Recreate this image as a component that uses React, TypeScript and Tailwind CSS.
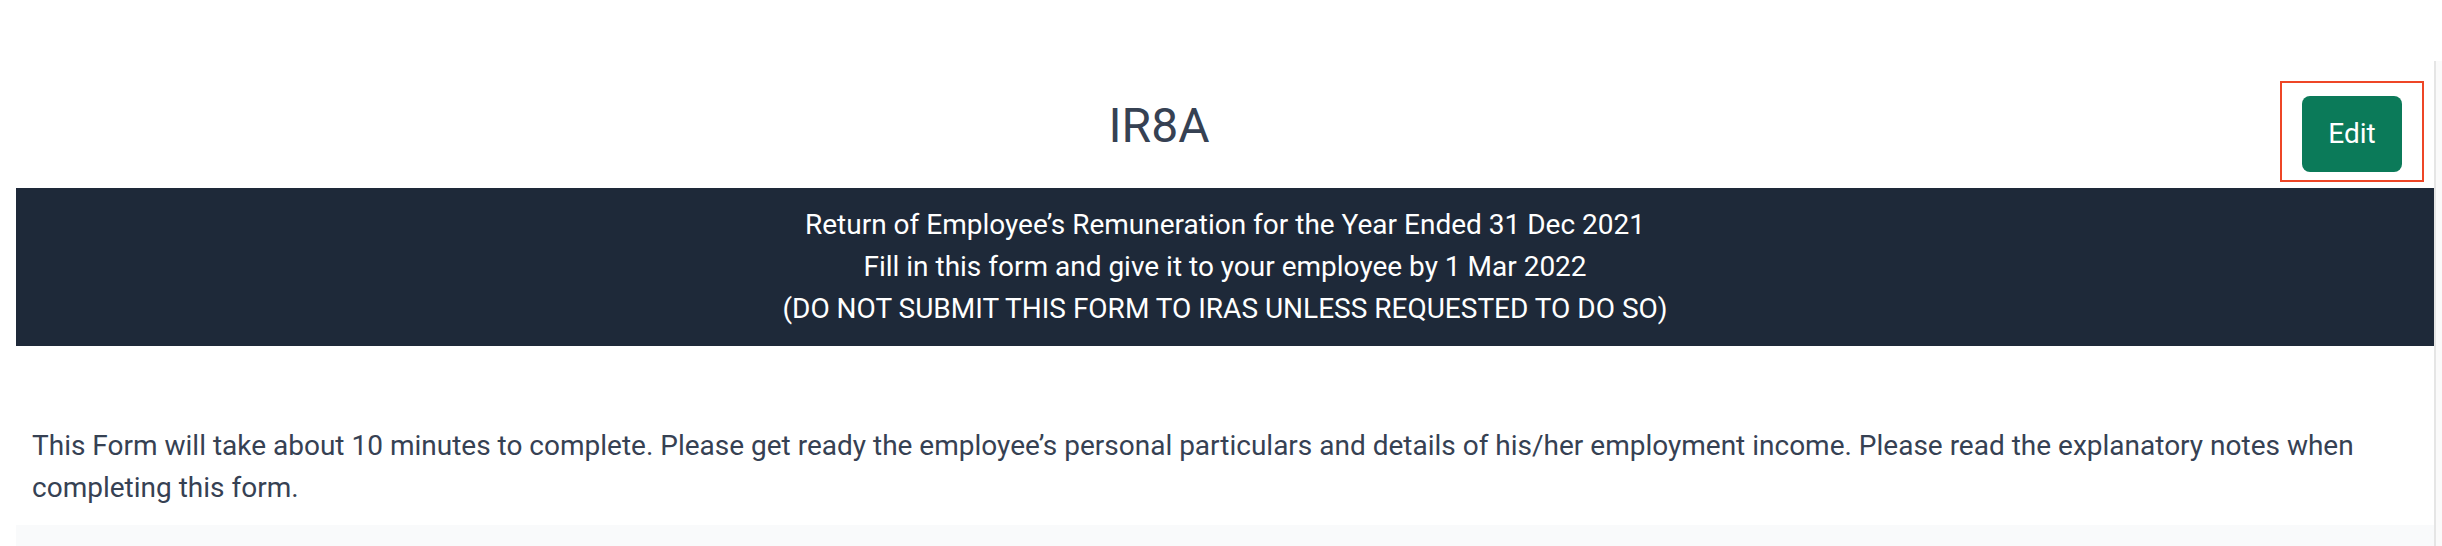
export default function App() {
  return (
    <div className="flex min-h-[546px] bg-white font-['Roboto',sans-serif] text-gray-700">
      {/* main column */}
      <div className="flex-1 pl-4">
        <div className="flex items-start">
          <h1 className="mt-[98px] flex-1 text-center text-[48px] font-normal leading-[56px] text-gray-700">
            IR8A
          </h1>
          <div className="relative mr-8 mt-[96px]">
            <button className="h-[76px] w-[100px] rounded-lg bg-[#0b7a59] text-[28px] text-white">
              Edit
            </button>
            {/* highlight frame */}
            <div className="pointer-events-none absolute -left-[22px] -right-[22px] -top-[15px] -bottom-[10px] border-2 border-[#ee4626]" />
          </div>
        </div>

        <div className="mt-4 bg-gray-800 py-4 text-center text-[28px] leading-[42px] text-white">
          <p>Return of Employee’s Remuneration for the Year Ended 31 Dec 2021</p>
          <p>Fill in this form and give it to your employee by 1 Mar 2022</p>
          <p>(DO NOT SUBMIT THIS FORM TO IRAS UNLESS REQUESTED TO DO SO)</p>
        </div>

        <p className="mt-[79px] px-4 text-[28px] leading-[42px] text-gray-700">
          This Form will take about 10 minutes to complete. Please get ready the employee’s personal particulars and
          details of his/her employment income. Please read the explanatory notes when completing this form.
        </p>

        <div className="mt-4 h-[40px] bg-gray-50" />
      </div>

      {/* right edge panel */}
      <div className="mt-[61px] w-2 border-l-2 border-[#e5e5e5] bg-[#fafafa]" />
    </div>
  );
}
